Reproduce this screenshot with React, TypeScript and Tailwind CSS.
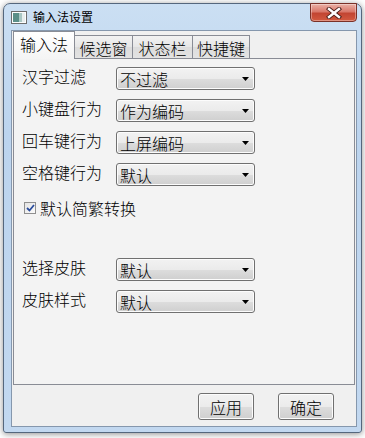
import React from "react";

const font = {
  fontFamily: '"Noto Sans CJK SC", "Noto Sans", sans-serif',
};

function ComboBox({ value }: { value: string }) {
  return (
    <div className="flex h-[23px] w-[139px] items-center justify-between rounded-[3px] border border-[#707070] bg-[linear-gradient(to_bottom,#f2f2f2_0%,#ebebeb_50%,#dddddd_51%,#cfcfcf_100%)] pl-[3px] pr-[5px] shadow-[inset_0_0_0_1px_#fcfcfc]">
      <span className="text-[16px] font-light leading-[20px] text-black">{value}</span>
      <svg width="7" height="4" viewBox="0 0 7 4">
        <path d="M0 0 H7 L3.5 4 Z" fill="#000" />
      </svg>
    </div>
  );
}

function Row({ label, value }: { label: string; value: string }) {
  return (
    <div className="flex h-[23px] items-center">
      <span className="mb-[6px] w-[94px] text-[16px] font-light leading-[18px] text-black">
        {label}
      </span>
      <ComboBox value={value} />
    </div>
  );
}

function Button({ label }: { label: string }) {
  return (
    <button className="flex h-[27px] w-[56px] items-center justify-center rounded-[3px] border border-[#707070] bg-[linear-gradient(to_bottom,#f2f2f2_0%,#ebebeb_50%,#dddddd_51%,#cfcfcf_100%)] text-[16px] font-light leading-[20px] text-black shadow-[inset_0_0_0_1px_#fcfcfc]">
      {label}
    </button>
  );
}

export default function App() {
  return (
    <div className="h-[438px] w-[365px] bg-white pl-[3px] pt-[3px]" style={font}>
      <div className="relative flex h-[430px] w-[359px] flex-col rounded-b-[3px] rounded-t-[7px] border border-[#55677d] bg-[linear-gradient(to_bottom,#cbdff3,#bcd4ee_30%,#c2d8f0)] shadow-[0_1px_6px_rgba(0,0,0,0.45)]">
        {/* title bar */}
        <div className="flex h-[26px] items-center pl-[7px]">
          <svg width="16" height="13" viewBox="0 0 16 13">
            <rect x="0.5" y="0.5" width="15" height="12" fill="#fdfdfd" stroke="#6d6d6d" />
            <rect x="2" y="2" width="6" height="9" fill="#5b8f88" />
            <rect x="8" y="2" width="3" height="9" fill="#a9c7c4" />
            <rect x="11" y="2" width="3" height="9" fill="#e7eeee" />
          </svg>
          <span className="ml-[6px] text-[12px] leading-[14px] text-black">输入法设置</span>
        </div>
        <div className="absolute right-[4px] top-[-1px] flex h-[19px] w-[47px] items-center justify-center rounded-b-[4px] border border-[#7a3128] bg-[linear-gradient(to_bottom,#eab1a6_0%,#d9786a_45%,#c24532_55%,#d35a40_100%)] shadow-[inset_0_0_0_1px_rgba(255,255,255,0.35)]">
          <svg width="16" height="12" viewBox="0 0 16 12">
            <path d="M3 2 L13 10 M13 2 L3 10" stroke="#4a1d18" strokeWidth="4.2" strokeLinecap="square" />
            <path d="M3 2 L13 10 M13 2 L3 10" stroke="#fff" strokeWidth="2.4" strokeLinecap="square" />
          </svg>
        </div>

        {/* client area */}
        <div className="ml-[7px] flex h-[397px] w-[346px] flex-col border border-[#8597ad] bg-[#f0f0f0]">
          <div className="ml-[1px] w-[342px]">
            {/* tabs */}
            <div className="flex h-[27px] items-end">
              <div className="relative z-10 -mb-px flex h-[28px] w-[62px] items-start justify-center border border-b-0 border-[#898c95] bg-[linear-gradient(to_bottom,#ffffff,#f4f4f4)] pt-[3px] text-[16px] font-light leading-[18px] text-black">
                输入法
              </div>
              {["候选窗", "状态栏", "快捷键"].map((t, i) => (
                <div
                  key={t}
                  className={
                    "flex h-[23px] items-start justify-center border border-b-0 border-l-0 border-[#898c95] bg-[linear-gradient(to_bottom,#f2f2f2,#e6e6e6_50%,#dcdcdc_51%,#e3e3e3)] pt-[3px] text-[16px] font-light leading-[18px] text-black " +
                    (i === 0 ? "w-[58px]" : i === 1 ? "w-[60px]" : "w-[57px]")
                  }
                >
                  {t}
                </div>
              ))}
            </div>

            {/* pane */}
            <div className="flex h-[327px] flex-col border border-[#898c95] bg-[#f3f3f3] pl-[8px] pt-[8px]">
              <div className="flex flex-col gap-[9px]">
                <Row label="汉字过滤" value="不过滤" />
                <Row label="小键盘行为" value="作为编码" />
                <Row label="回车键行为" value="上屏编码" />
                <Row label="空格键行为" value="默认" />
              </div>

              <div className="ml-[2px] mt-[14px] flex h-[16px] items-center">
                <div className="flex h-[12px] w-[12px] items-center justify-center border border-[#8f8f8f] bg-[linear-gradient(135deg,#e4e4e4,#fbfbfb)]">
                  <svg width="9" height="8" viewBox="0 0 9 8">
                    <path d="M1 4 L3.5 6.5 L8 1" stroke="#2a4c9c" strokeWidth="1.8" fill="none" />
                  </svg>
                </div>
                <span className="ml-[4px] text-[16px] font-light leading-[18px] text-black">默认简繁转换</span>
              </div>

              <div className="mt-[42px] flex flex-col gap-[9px]">
                <Row label="选择皮肤" value="默认" />
                <Row label="皮肤样式" value="默认" />
              </div>
            </div>
          </div>

          {/* buttons */}
          <div className="mr-[22px] mt-[8px] flex justify-end gap-[24px]">
            <Button label="应用" />
            <Button label="确定" />
          </div>
        </div>
      </div>
    </div>
  );
}
